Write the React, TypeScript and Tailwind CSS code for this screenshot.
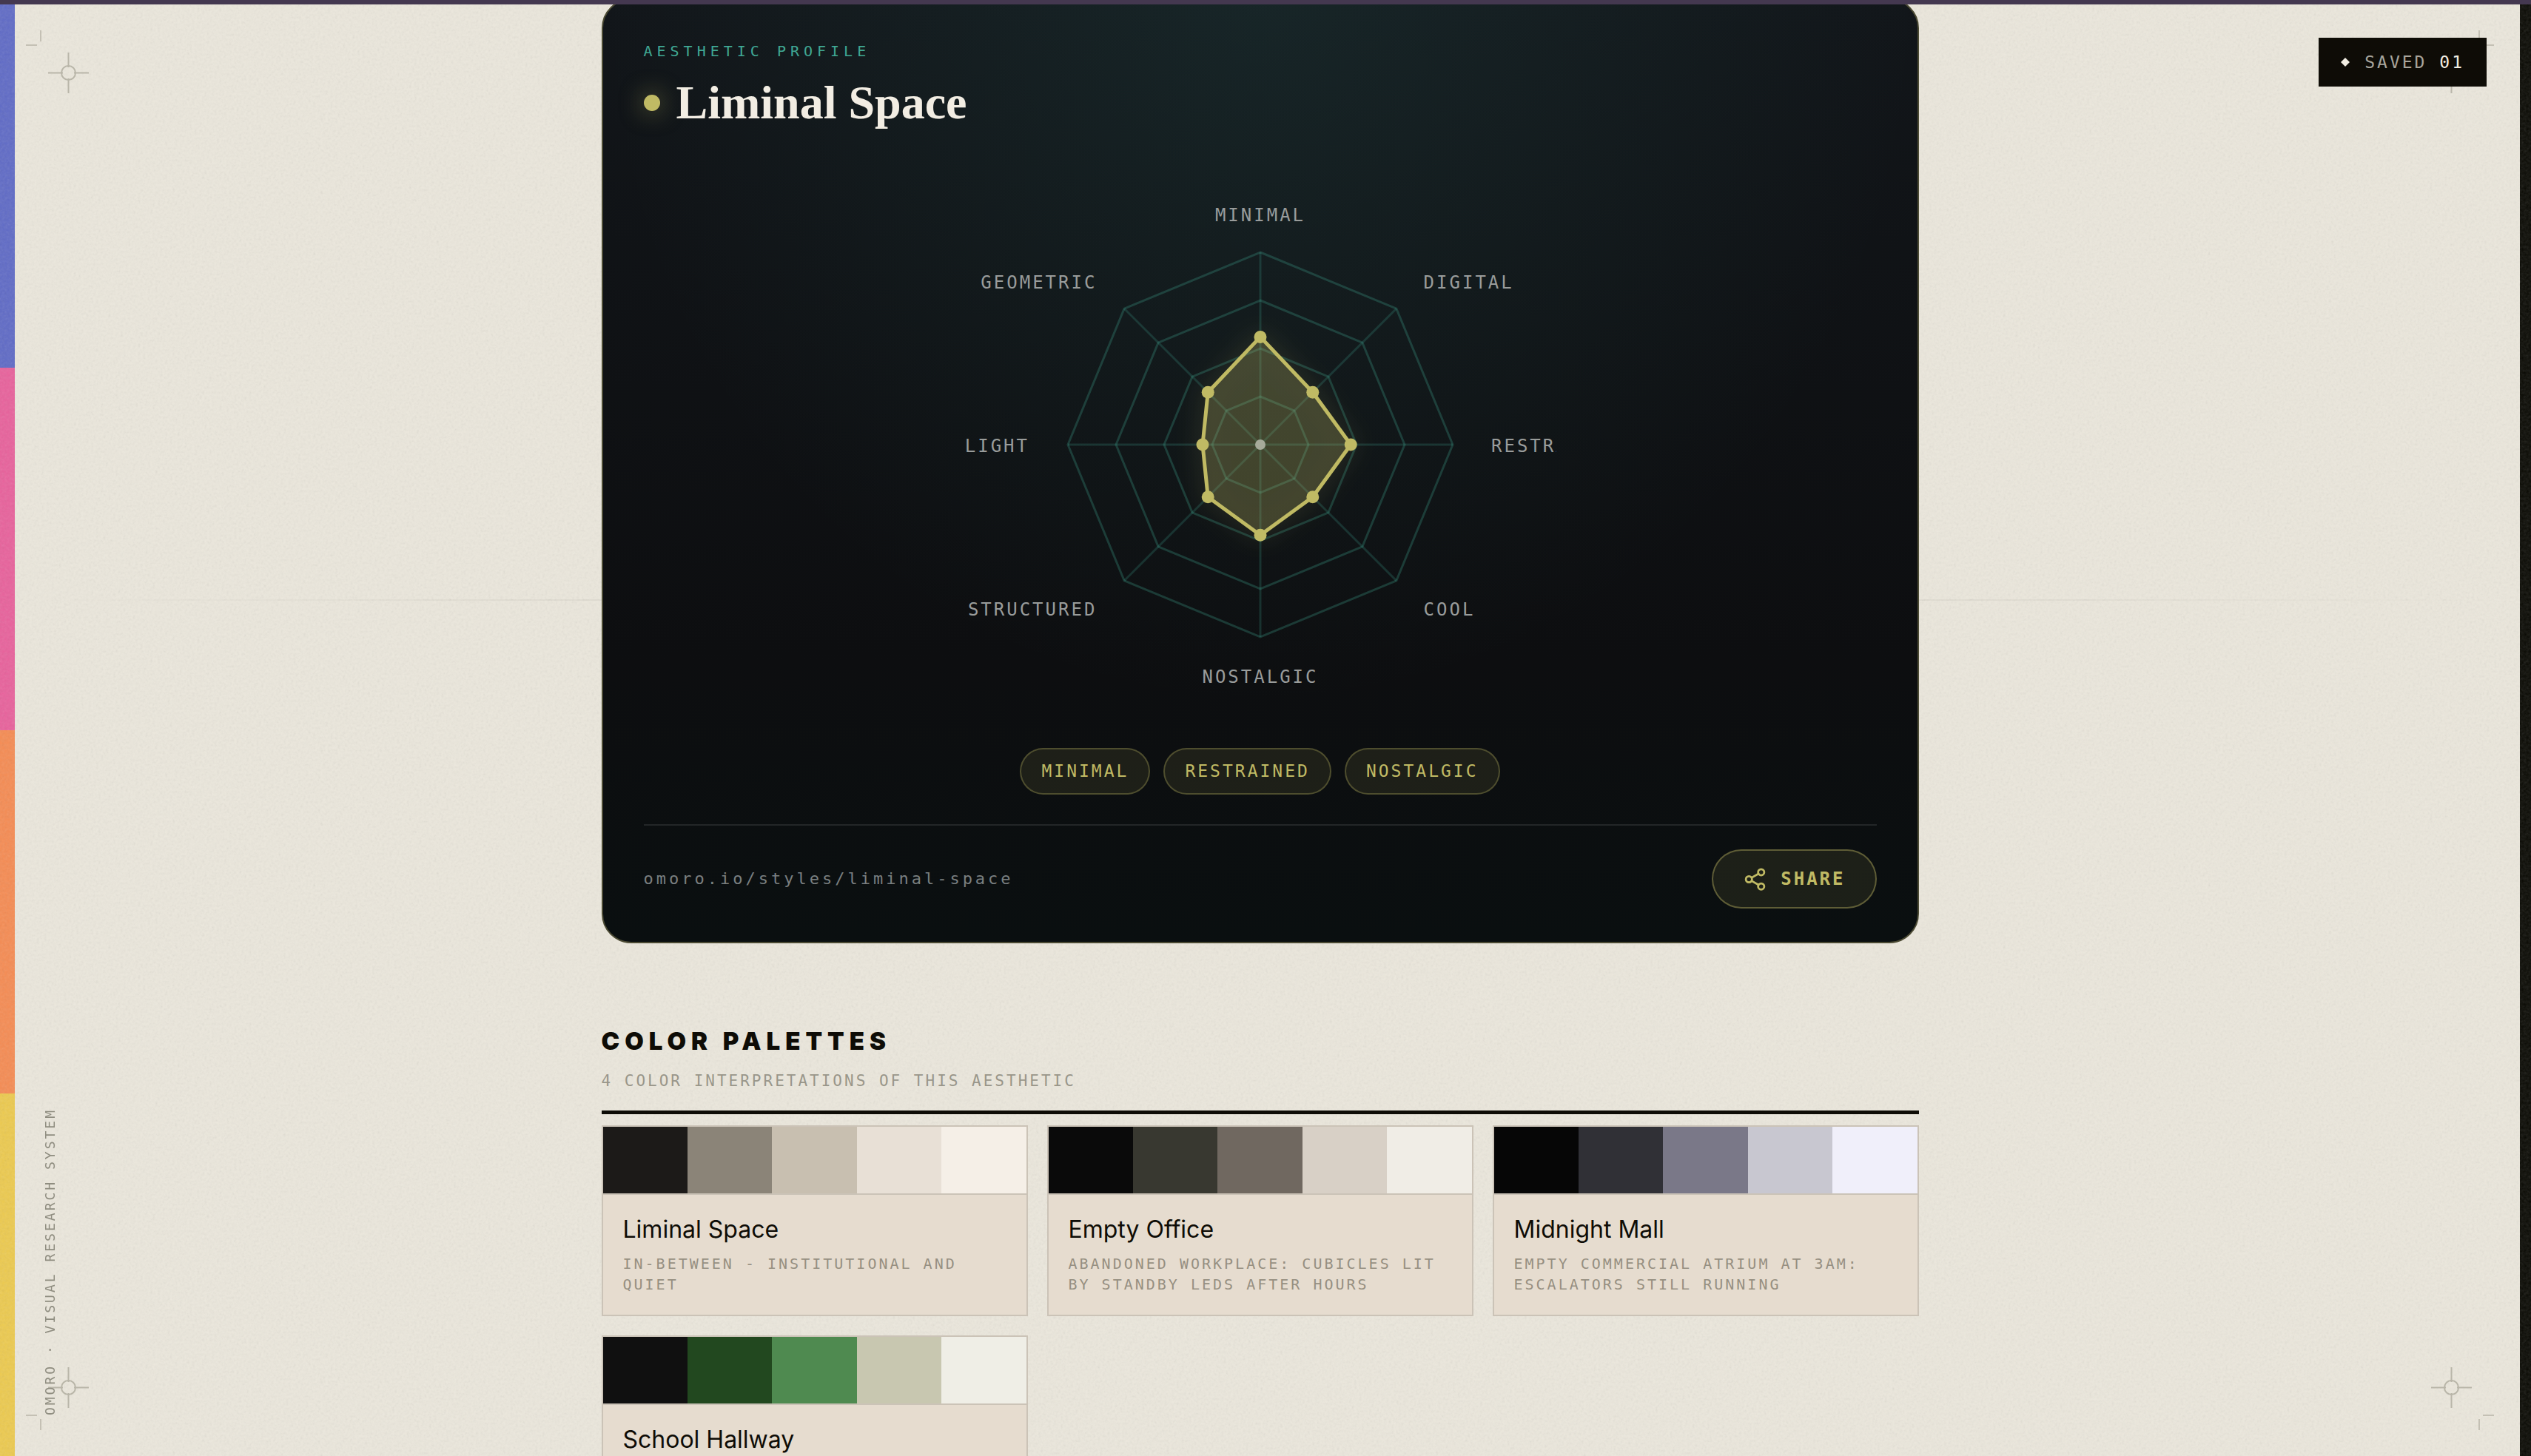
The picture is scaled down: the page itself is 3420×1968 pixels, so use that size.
import { Share2 } from 'lucide-react';

const STRIPES = ['bg-[#606bc6]', 'bg-[#e8629c]', 'bg-[#f58c54]', 'bg-[#ecca50]'];

const TAGS = ['Minimal', 'Restrained', 'Nostalgic'];

// Clockwise from the top, value is a share of the full radius
const AXES = [
  { label: 'MINIMAL', value: 0.56 },
  { label: 'DIGITAL', value: 0.385 },
  { label: 'RESTRAINED', value: 0.47 },
  { label: 'COOL', value: 0.385 },
  { label: 'NOSTALGIC', value: 0.47 },
  { label: 'STRUCTURED', value: 0.385 },
  { label: 'LIGHT', value: 0.3 },
  { label: 'GEOMETRIC', value: 0.385 },
];

interface Palette {
  name: string;
  description?: string;
  swatches: string[];
}

const PALETTES: Palette[] = [
  {
    name: 'Liminal Space',
    description: 'In-between - institutional and quiet',
    swatches: ['bg-[#1c1a18]', 'bg-[#8b8478]', 'bg-[#c8bfb0]', 'bg-[#e8e0d6]', 'bg-[#f5efe7]'],
  },
  {
    name: 'Empty Office',
    description: 'Abandoned workplace: cubicles lit by standby LEDs after hours',
    swatches: ['bg-[#0a0a0a]', 'bg-[#383830]', 'bg-[#706860]', 'bg-[#d8d0c6]', 'bg-[#f0ede6]'],
  },
  {
    name: 'Midnight Mall',
    description: 'Empty commercial atrium at 3am: escalators still running',
    swatches: ['bg-[#060606]', 'bg-[#303036]', 'bg-[#7a7888]', 'bg-[#c8c7d0]', 'bg-[#f0effa]'],
  },
  {
    name: 'School Hallway',
    swatches: ['bg-[#101010]', 'bg-[#22481f]', 'bg-[#4f8a50]', 'bg-[#c8c7b0]', 'bg-[#efeee6]'],
  },
];

const CENTER = 400;
const RADIUS = 260;
const LABEL_RADIUS = 312;

function point(index: number, radius: number) {
  const angle = (index * Math.PI) / 4 - Math.PI / 2;
  return { x: CENTER + Math.cos(angle) * radius, y: CENTER + Math.sin(angle) * radius };
}

function polygon(radii: number[]) {
  return radii
    .map((radius, i) => {
      const p = point(i, radius);
      return `${p.x.toFixed(2)},${p.y.toFixed(2)}`;
    })
    .join(' ');
}

function RadarChart() {
  return (
    <svg viewBox="0 0 800 800" className="w-[800px] max-w-full overflow-hidden" role="img" aria-label="Aesthetic profile chart">
      <defs>
        <filter id="glow" x="-50%" y="-50%" width="200%" height="200%">
          <feDropShadow dx="0" dy="0" stdDeviation="16" floodColor="#c0ba64" floodOpacity="0.35" />
        </filter>
      </defs>

      {/* Grid */}
      <g fill="none" stroke="#40a894" strokeWidth="3">
        {[0.25, 0.5, 0.75, 1].map((level) => (
          <polygon key={level} points={polygon(AXES.map(() => RADIUS * level))} strokeOpacity="0.28" />
        ))}
        {AXES.map((axis, i) => {
          const end = point(i, RADIUS);
          return <line key={axis.label} x1={CENTER} y1={CENTER} x2={end.x} y2={end.y} strokeOpacity="0.22" />;
        })}
      </g>

      {/* Profile shape */}
      <polygon
        points={polygon(AXES.map((axis) => axis.value * RADIUS))}
        fill="#c0ba64"
        fillOpacity="0.22"
        stroke="#c0ba64"
        strokeWidth="5"
        strokeLinejoin="round"
        filter="url(#glow)"
      />
      {AXES.map((axis, i) => {
        const p = point(i, axis.value * RADIUS);
        return <circle key={axis.label} cx={p.x} cy={p.y} r="8.5" fill="#c0ba64" />;
      })}
      <circle cx={CENTER} cy={CENTER} r="7" fill="#a6aa9a" />

      {/* Labels */}
      {AXES.map((axis, i) => {
        const p = point(i, LABEL_RADIUS);
        const anchor = i % 4 === 0 ? 'middle' : i < 4 ? 'start' : 'end';
        return (
          <text
            key={axis.label}
            x={p.x}
            y={p.y + 10}
            textAnchor={anchor}
            className="fill-[#999c9b] font-['DejaVu_Sans_Mono',monospace] text-[24px] tracking-[3px]"
          >
            {axis.label}
          </text>
        );
      })}
    </svg>
  );
}

function Crosshair({ className }: { className: string }) {
  return (
    <svg viewBox="0 0 55 55" fill="none" stroke="#b9b6a9" strokeWidth="2" className={`absolute size-[55px] ${className}`}>
      <circle cx="27.5" cy="27.5" r="9.5" />
      <path d="M27.5 0v20M27.5 35v20M0 27.5h20M35 27.5h20" />
    </svg>
  );
}

function CropMark({ className }: { className: string }) {
  return (
    <svg viewBox="0 0 21 21" fill="none" stroke="#c4c0b4" strokeWidth="2" className={`absolute size-[21px] ${className}`}>
      <path d="M20 0v15M0 20h15" />
    </svg>
  );
}

function PaperGrain() {
  return (
    <svg className="pointer-events-none absolute inset-0 size-full opacity-15" aria-hidden="true">
      <filter id="grain">
        <feTurbulence type="fractalNoise" baseFrequency="0.3" numOctaves="3" stitchTiles="stitch" />
        <feColorMatrix type="saturate" values="0" />
      </filter>
      <rect width="100%" height="100%" filter="url(#grain)" />
    </svg>
  );
}

export default function App() {
  return (
    <div className="flex h-screen flex-col overflow-hidden bg-[#ebe7dc] font-['Inter',sans-serif] text-[#0e0c06]">
      <div className="h-1.5 shrink-0 bg-[#443850]" />

      <div className="relative flex min-h-0 flex-1">
        <div className="flex w-5 flex-col">
          {STRIPES.map((color) => (
            <div key={color} className={`flex-1 ${color}`} />
          ))}
        </div>
        <PaperGrain />

        {/* Print marks */}
        <div className="pointer-events-none absolute inset-y-0 left-0 right-[15px]">
          <div className="absolute inset-x-0 top-[804px] h-0.5 bg-linear-to-r from-transparent via-[#0e0c06]/10 to-transparent" />
          <CropMark className="left-[35px] top-[35px]" />
          <CropMark className="right-[35px] top-[35px] -scale-x-100" />
          <CropMark className="bottom-[35px] left-[35px] -scale-y-100" />
          <CropMark className="bottom-[35px] right-[35px] -scale-100" />
          <Crosshair className="left-[65px] top-[65px]" />
          <Crosshair className="right-[65px] top-[65px]" />
          <Crosshair className="bottom-[65px] left-[65px]" />
          <Crosshair className="bottom-[65px] right-[65px]" />
          <p className="absolute bottom-[55px] left-[57px] rotate-180 font-['DejaVu_Sans_Mono',monospace] text-[18px] leading-[22px] tracking-[3px] text-[#8f8d80] [writing-mode:vertical-rl]">
            OMORO · VISUAL RESEARCH SYSTEM
          </p>
        </div>

        <main className="relative min-w-0 flex-1 overflow-hidden pr-5">
          <div className="mx-auto -mt-2 max-w-[1780px]">
            {/* Profile card */}
            <section className="rounded-[40px] border-2 border-[#4b4a33] bg-[#0d0e10] bg-[radial-gradient(ellipse_50%_75%_at_50%_0%,rgba(64,150,140,0.12),transparent),linear-gradient(180deg,#12161a,#0d0e10_70%,#0a0f10)] bg-origin-border px-[55px] pb-[45px] pt-[57px]">
              <p className="font-['DejaVu_Sans_Mono',monospace] text-[20px] leading-6 tracking-[6px] text-[#40a894]">
                AESTHETIC PROFILE
              </p>
              <div className="mt-[22px] flex items-center gap-[22px]">
                <span className="size-[22px] rounded-full bg-[#c0ba64] shadow-[0_0_32px_rgba(192,186,100,0.6)]" />
                <h1 className="font-['Liberation_Serif',serif] text-[64px] font-bold leading-[72px] text-[#f2ede3]">
                  Liminal Space
                </h1>
              </div>

              <div className="mt-[26px] flex justify-center">
                <RadarChart />
              </div>

              <ul className="mt-[10px] flex justify-center gap-[18px]">
                {TAGS.map((tag) => (
                  <li
                    key={tag}
                    className="rounded-full border-2 border-[#c0ba64]/30 bg-[#c0ba64]/10 px-[27px] py-3 font-['DejaVu_Sans_Mono',monospace] text-[23px] leading-[35px] tracking-[3px] text-[#c0ba64] uppercase"
                  >
                    {tag}
                  </li>
                ))}
              </ul>

              <div className="mt-10 flex items-center justify-between border-t-2 border-white/10 pt-8">
                <a href="#profile" className="font-['DejaVu_Sans_Mono',monospace] text-[22px] leading-7 tracking-[4px] text-[#7a7f80]">
                  omoro.io/styles/liminal-space
                </a>
                <button className="flex h-20 items-center gap-[18px] rounded-full border-2 border-[#c0ba64]/40 bg-[#c0ba64]/10 px-10 font-['DejaVu_Sans_Mono',monospace] text-[24px] font-bold tracking-[3px] text-[#c0ba64]">
                  <Share2 className="size-[33px]" strokeWidth={2} />
                  SHARE
                </button>
              </div>
            </section>

            {/* Color palettes */}
            <section className="mt-28">
              <header className="border-b-5 border-[#0e0c06] pb-[26px]">
                <h2 className="text-[33px] font-black leading-10 tracking-[7px]">COLOR PALETTES</h2>
                <p className="mt-5 font-['DejaVu_Sans_Mono',monospace] text-[21px] leading-7 tracking-[3px] text-[#99968a]">
                  4 COLOR INTERPRETATIONS OF THIS AESTHETIC
                </p>
              </header>

              <div className="mt-[15px] grid grid-cols-3 gap-[26px]">
                {PALETTES.map((palette) => (
                  <article key={palette.name} className="border-2 border-[#cbc3b7] bg-[#e6dccf]">
                    <div className="flex h-[92px] border-b-2 border-[#cbc3b7]">
                      {palette.swatches.map((swatch) => (
                        <div key={swatch} className={`flex-1 ${swatch}`} />
                      ))}
                    </div>
                    <div className="p-[27px]">
                      <h3 className="text-[32px] leading-10">{palette.name}</h3>
                      {palette.description && (
                        <p className="mt-3 font-['DejaVu_Sans_Mono',monospace] text-[20px] leading-7 tracking-[3px] text-[#968f81] uppercase">
                          {palette.description}
                        </p>
                      )}
                    </div>
                  </article>
                ))}
              </div>
            </section>
          </div>
        </main>

        <button className="absolute right-[60px] top-[45px] flex h-[66px] items-center gap-5 bg-[#0e0c06] px-[30px] font-['DejaVu_Sans_Mono',monospace] text-[23px] tracking-[3px] text-[#a8a59c]">
          <svg viewBox="0 0 12 12" className="size-3 fill-[#f2eee2]" aria-hidden="true">
            <path d="M6 0l6 6-6 6-6-6z" />
          </svg>
          <span>
            SAVED <span className="text-[#f2eee2]">01</span>
          </span>
        </button>

        <div className="w-[15px] bg-[#0a0a04]" />
      </div>
    </div>
  );
}
